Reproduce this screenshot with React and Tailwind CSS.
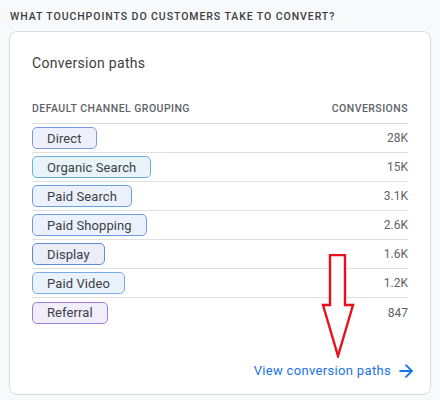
import React from "react";
import { ArrowRight } from "lucide-react";

const rows = [
  { name: "Direct", value: "28K", chip: "border-[#7b99ec] bg-[#eef0fd]" },
  { name: "Organic Search", value: "15K", chip: "border-[#68b1da] bg-[#e8f4f9]" },
  { name: "Paid Search", value: "3.1K", chip: "border-[#6a9ee9] bg-[#ecf2fd]" },
  { name: "Paid Shopping", value: "2.6K", chip: "border-[#6a9ee9] bg-[#ecf2fd]" },
  { name: "Display", value: "1.6K", chip: "border-[#5f8bdb] bg-[#ebeef9]" },
  { name: "Paid Video", value: "1.2K", chip: "border-[#76abec] bg-[#e9f2fd]" },
  { name: "Referral", value: "847", chip: "border-[#9c7de0] bg-[#f2edfb]" },
];

const App = () => {
  return (
    <div className="h-[400px] w-[440px] overflow-hidden bg-[#f8f9fa] pl-[9px] pt-[11px] font-['Roboto',sans-serif]">
      {/* Section heading */}
      <div className="ml-px h-[20px] text-[10.5px] leading-[12px] font-medium tracking-[0.93px] text-[#3c4043]">
        WHAT TOUCHPOINTS DO CUSTOMERS TAKE TO CONVERT?
      </div>

      {/* Card */}
      <div className="relative flex h-[364px] w-[422px] flex-col rounded-[8px] border border-[#dadce0] bg-white pl-[22px] pr-[22px]">
        <div className="mt-[21px] text-[14px] leading-[20px] tracking-[0.3px] text-[#3c4043]">Conversion paths</div>

        <div className="mt-[29px] flex h-[22px] items-start justify-between border-b border-[#dadce0] text-[10.5px] leading-[14px] font-medium tracking-[0.45px] text-[#5f6368]">
          <span>DEFAULT CHANNEL GROUPING</span>
          <span>CONVERSIONS</span>
        </div>

        {rows.map((row, i) => (
          <div
            key={row.name}
            className={`flex h-[29px] items-center justify-between ${i < rows.length - 1 ? "border-b border-[#e0e0e0]" : ""}`}
          >
            <span className={`flex h-[22px] items-center rounded-[5px] border px-[14px] pt-px text-[13px] tracking-[0.1px] text-[#3c4043] ${row.chip}`}>
              {row.name}
            </span>
            <span className="text-[12px] text-[#5f6368]">{row.value}</span>
          </div>
        ))}

        <div className="mt-[34px] mr-[-8px] flex items-center justify-end gap-[5px] text-[13px] tracking-[0.33px] text-[#1a73e8]">
          <span>View conversion paths</span>
          <ArrowRight className="h-[20px] w-[20px]" strokeWidth={2.2} />
        </div>

        {/* Red annotation arrow */}
        <svg className="absolute left-[311px] top-[222px]" width="34" height="104" viewBox="0 0 34 104" fill="none">
          <path d="M9 1V51H2L17 102L32 51H24V1Z" stroke="#e8101c" strokeWidth="2.4" fill="white" />
        </svg>
      </div>
    </div>
  );
};

export default App;
